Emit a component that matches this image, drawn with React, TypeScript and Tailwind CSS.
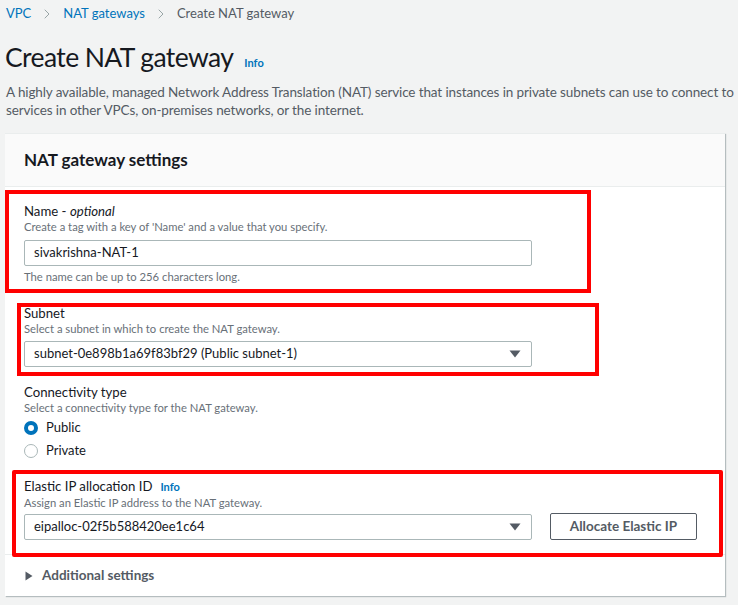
import { ChevronRight } from 'lucide-react'

const font = { fontFamily: 'Lato, "Open Sans", sans-serif' }

function Caret() {
  return (
    <svg width="12" height="8" viewBox="0 0 12 8" className="shrink-0">
      <path d="M0.5 0.5 H11.5 L6 7.5 Z" fill="#545b64" />
    </svg>
  )
}

function Select({ value }: { value: string }) {
  return (
    <div className="flex items-center justify-between w-[508px] h-[26px] pl-[9px] pr-[10px] bg-white border border-[#aab7b8] rounded-[2px] text-[13px] text-[#16191f]">
      <span>{value}</span>
      <Caret />
    </div>
  )
}

function Radio({ label, checked }: { label: string; checked?: boolean }) {
  return (
    <div className="flex items-center gap-[8px] h-[23px]">
      {checked ? (
        <span className="w-[14px] h-[14px] rounded-full border-[4px] border-[#0073bb] bg-white" />
      ) : (
        <span className="w-[14px] h-[14px] rounded-full border border-[#aab7b8] bg-white" />
      )}
      <span className="text-[13px] text-[#16191f]">{label}</span>
    </div>
  )
}

export default function App() {
  return (
    <div className="relative w-[738px] h-[605px] overflow-hidden bg-[#f2f3f3]" style={font}>
      {/* breadcrumb */}
      <div className="flex items-center h-[27px] pl-[6px] text-[13px]">
        <span className="text-[#0073bb]">VPC</span>
        <ChevronRight size={16} strokeWidth={1.25} className="mx-[8px] text-[#879596]" />
        <span className="text-[#0073bb]">NAT gateways</span>
        <ChevronRight size={16} strokeWidth={1.25} className="mx-[8px] text-[#879596]" />
        <span className="text-[#545b64]">Create NAT gateway</span>
      </div>

      {/* heading */}
      <div className="flex items-baseline gap-[11px] pl-[5px] mt-[14px]">
        <h1 className="text-[26.5px] leading-[32px] tracking-[-0.6px] text-[#16191f]">Create NAT gateway</h1>
        <span className="text-[11px] font-bold text-[#0073bb]">Info</span>
      </div>
      <p className="pl-[6px] pr-[4px] mt-[10px] text-[13.5px] leading-[18px] tracking-[-0.12px] text-[#545b64]">
        A highly available, managed Network Address Translation (NAT) service that instances in private subnets can use to connect to services in other VPCs, on-premises networks, or the internet.
      </p>

      {/* card */}
      <div className="ml-[5px] mt-[14px] w-[720px] bg-white shadow-[1px_1px_1px_rgba(0,28,36,0.25)] border-t border-[#eaeded]">
        <div className="h-[53px] flex items-center px-[19px] bg-[#fafafa] border-b border-[#eaeded]">
          <h2 className="text-[17px] font-bold text-[#16191f]">NAT gateway settings</h2>
        </div>

        <div className="px-[19px] pt-[15px]">
          {/* name */}
          <div className="text-[13.2px] leading-[18px] text-[#16191f]">
            Name - <i>optional</i>
          </div>
          <div className="text-[11.25px] leading-[14px] text-[#687078]">Create a tag with a key of 'Name' and a value that you specify.</div>
          <div className="mt-[6px] w-[508px] h-[26px] flex items-center pl-[9px] bg-white border border-[#aab7b8] rounded-[2px] text-[13px] text-[#16191f]">
            sivakrishna-NAT-1
          </div>
          <div className="mt-[4px] text-[11.25px] leading-[14px] text-[#687078]">The name can be up to 256 characters long.</div>

          {/* subnet */}
          <div className="mt-[20px] text-[13.2px] leading-[18px] text-[#16191f]">Subnet</div>
          <div className="text-[11.25px] leading-[14px] text-[#687078]">Select a subnet in which to create the NAT gateway.</div>
          <div className="mt-[5px]">
            <Select value="subnet-0e898b1a69f83bf29 (Public subnet-1)" />
          </div>

          {/* connectivity */}
          <div className="mt-[16px] text-[13.2px] leading-[18px] text-[#16191f]">Connectivity type</div>
          <div className="text-[11.25px] leading-[14px] text-[#687078]">Select a connectivity type for the NAT gateway.</div>
          <div className="mt-[1px]">
            <Radio label="Public" checked />
            <Radio label="Private" />
          </div>

          {/* elastic ip */}
          <div className="mt-[15px] flex items-baseline gap-[8px] text-[13.2px] leading-[18px] text-[#16191f]">
            <span>Elastic IP allocation ID</span>
            <span className="text-[11px] font-bold text-[#0073bb]">Info</span>
          </div>
          <div className="text-[11.25px] leading-[14px] text-[#687078]">Assign an Elastic IP address to the NAT gateway.</div>
          <div className="mt-[3px] flex items-center gap-[18px]">
            <Select value="eipalloc-02f5b588420ee1c64" />
            <button className="w-[147px] h-[27px] border border-[#545b64] rounded-[2px] bg-white text-[13.5px] font-bold text-[#545b64]">
              Allocate Elastic IP
            </button>
          </div>
        </div>

        {/* additional */}
        <div className="mt-[14px] border-t border-[#eaeded] h-[42px] flex items-center pl-[20px] gap-[9px]">
          <svg width="8" height="10" viewBox="0 0 8 10">
            <path d="M0.5 0.5 L7.5 5 L0.5 9.5 Z" fill="#545b64" />
          </svg>
          <span className="text-[13.5px] font-bold text-[#545b64]">Additional settings</span>
        </div>
      </div>

      {/* annotation boxes */}
      <div className="absolute left-[5px] top-[190px] w-[586px] h-[103px] border-[4px] border-[#ff0000]" />
      <div className="absolute left-[17px] top-[303px] w-[582px] h-[73px] border-[4px] border-[#ff0000]" />
      <div className="absolute left-[12px] top-[470px] w-[711px] h-[87px] border-[4px] border-[#ff0000] rounded-[2px]" />
    </div>
  )
}
